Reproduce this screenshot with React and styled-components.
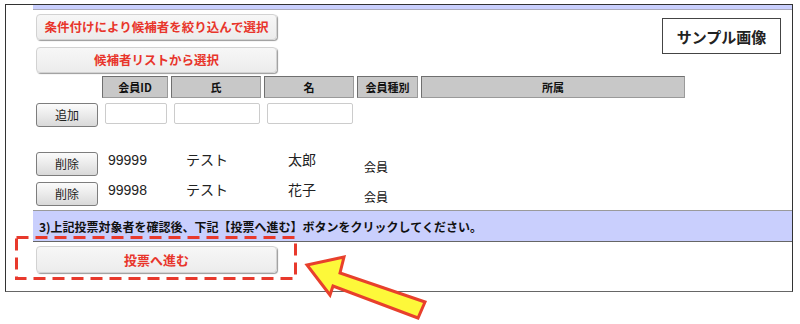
import styled, { createGlobalStyle } from 'styled-components';

const GlobalStyle = createGlobalStyle`
  body {
    margin: 0;
    background: #ffffff;
    font-family: 'Noto Sans CJK JP', 'Noto Sans', sans-serif;
    color: #111111;
  }
`;

const headCols = [
  { label: '会員ID', width: 66 },
  { label: '氏', width: 90 },
  { label: '名', width: 90 },
  { label: '会員種別', width: 61 },
  { label: '所属', width: 264 },
];

const inputWidths = [62, 86, 86];

const members = [
  { id: '99999', sei: 'テスト', mei: '太郎', kind: '会員' },
  { id: '99998', sei: 'テスト', mei: '花子', kind: '会員' },
];

const App = () => (
  <Page>
    <GlobalStyle />
    <Frame>
      <TopStrip />
      <Upper>
        <ButtonStack>
          <WideButton>条件付けにより候補者を絞り込んで選択</WideButton>
          <WideButton>候補者リストから選択</WideButton>
        </ButtonStack>
        <SampleBox>サンプル画像</SampleBox>
      </Upper>

      <HeadRow>
        <span />
        {headCols.map((c) => (
          <HeadCell key={c.label} $w={c.width}>
            {c.label}
          </HeadCell>
        ))}
      </HeadRow>

      <AddRow>
        <SmallButton>追加</SmallButton>
        {inputWidths.map((w, i) => (
          <TextInput key={i} $w={w} />
        ))}
      </AddRow>

      <MemberList>
        {members.map((m) => (
          <MemberRow key={m.id}>
            <SmallButton>削除</SmallButton>
            <DataText>{m.id}</DataText>
            <DataText>{m.sei}</DataText>
            <DataText>{m.mei}</DataText>
            <KindText>{m.kind}</KindText>
          </MemberRow>
        ))}
      </MemberList>

      <InfoBar>3)上記投票対象者を確認後、下記【投票へ進む】ボタンをクリックしてください。</InfoBar>

      <FinalWrap>
        <WideButton $tall>投票へ進む</WideButton>
      </FinalWrap>
    </Frame>

    {/* callout marks drawn over the page */}
    <Overlay width="800" height="324" viewBox="0 0 800 324">
      <rect
        x="16.5"
        y="237.5"
        width="279"
        height="41"
        fill="none"
        stroke="#e8392c"
        strokeWidth="3"
        strokeDasharray="12 7"
      />
      <polygon
        points="307,265 344,257 340,273 425,302 418,318 333,286 330,295"
        fill="#fdf83a"
        stroke="#e8402c"
        strokeWidth="3"
        strokeLinejoin="miter"
      />
    </Overlay>
  </Page>
);

const Page = styled.div`
  position: relative;
  width: 800px;
  height: 324px;
  overflow: hidden;
`;

const Frame = styled.div`
  position: absolute;
  left: 5px;
  top: 4px;
  width: 759px;
  height: 286px;
  border: 1px solid #333333;
  border-bottom-color: #666666;
  padding-left: 27px;
  display: flex;
  flex-direction: column;
`;

const TopStrip = styled.div`
  height: 4px;
  background: #c9cffd;
  border-bottom: 1px solid #a9a9b9;
`;

const Upper = styled.div`
  display: flex;
  justify-content: space-between;
  align-items: flex-start;
`;

const ButtonStack = styled.div`
  display: flex;
  flex-direction: column;
  gap: 7px;
  margin: 4px 0 0 3px;
`;

const WideButton = styled.button`
  width: 241px;
  height: ${({ $tall }) => ($tall ? 27 : 26)}px;
  padding: 0;
  border: 1px solid #d2d2d2;
  border-radius: 4px;
  background: linear-gradient(#f7f7f7, #ececec);
  box-shadow: 1px 1px 1px #9a9a9a;
  color: #e8352b;
  font-family: 'Noto Sans CJK JP', sans-serif;
  font-size: ${({ $tall }) => ($tall ? 13 : 12.5)}px;
  font-weight: bold;
  line-height: 1;
  text-align: center;
`;

const SampleBox = styled.div`
  margin: 8px 11px 0 0;
  width: 117px;
  height: 34px;
  border: 1px solid #444444;
  display: flex;
  align-items: center;
  justify-content: center;
  font-size: 15px;
  font-weight: bold;
  color: #222222;
`;

const HeadRow = styled.div`
  display: flex;
  gap: 3px;
  margin: 3px 0 0 3px;
  & > span {
    width: 63px;
  }
`;

const HeadCell = styled.div`
  width: ${({ $w }) => $w - 2}px;
  height: 20px;
  background: #c8c8c8;
  border: 1px solid #6f6f6f;
  border-right-color: #9a9a9a;
  border-bottom-color: #9a9a9a;
  display: flex;
  align-items: center;
  justify-content: center;
  font-size: 11px;
  font-weight: bold;
  color: #111111;
`;

const AddRow = styled.div`
  display: flex;
  align-items: flex-start;
  gap: 7px;
  margin: 5px 0 0 3px;
`;

const SmallButton = styled.button`
  width: 62px;
  height: 24px;
  padding: 0;
  border: 1px solid #7d7d7d;
  border-radius: 3px;
  background: linear-gradient(#fbfbfb, #e9e9e9 55%, #d9d9d9);
  color: #222222;
  font-family: 'Noto Sans CJK JP', sans-serif;
  font-size: 12px;
  line-height: 1;
`;

const TextInput = styled.input`
  width: ${({ $w }) => $w - 2}px;
  height: 19px;
  margin: 0;
  padding: 0;
  border: 1px solid #cccccc;
  border-radius: 2px;
  background: #ffffff;
`;

const MemberList = styled.div`
  display: flex;
  flex-direction: column;
  gap: 6px;
  margin: 25px 0 0 3px;
`;

const MemberRow = styled.div`
  display: grid;
  grid-template-columns: 72px 78px 102px 76px 1fr;
  align-items: start;
  height: 24px;
`;

const DataText = styled.span`
  font-family: 'Liberation Sans', 'Noto Sans CJK JP', sans-serif;
  font-size: 14px;
  line-height: 16px;
  color: #222222;
`;

const KindText = styled.span`
  font-size: 12px;
  line-height: 14px;
  margin-top: 8px;
  color: #111111;
`;

const InfoBar = styled.div`
  margin-top: 4px;
  height: 30px;
  background: #c9cffd;
  border-top: 1px solid #9a9a9a;
  border-bottom: 1px solid #666666;
  display: flex;
  align-items: center;
  padding-left: 6px;
  font-size: 12px;
  font-weight: bold;
  color: #111111;
`;

const FinalWrap = styled.div`
  margin: 4px 0 0 3px;
`;

const Overlay = styled.svg`
  position: absolute;
  left: 0;
  top: 0;
  pointer-events: none;
`;

export default App;
